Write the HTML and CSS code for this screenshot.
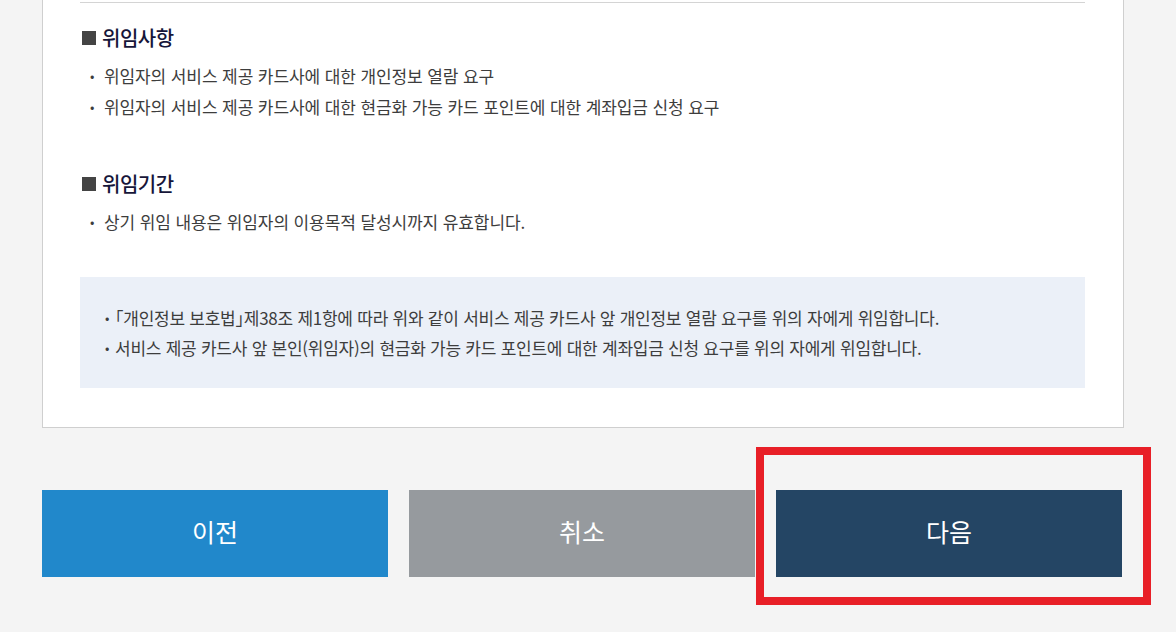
FILE: index.html
```html
<!DOCTYPE html>
<html lang="ko">
<head>
    <meta charset="UTF-8">
    <meta name="viewport" content="width=device-width, initial-scale=1.0">
    <title>위임 확인</title>
    <link rel="stylesheet" href="styles.css">
</head>
<body>
    <div class="wrap">
        <div class="card">
            <div class="divider"></div>

            <div class="section">
                <h3 class="sec-title">위임사항</h3>
                <ul class="dot-list">
                    <li>위임자의 서비스 제공 카드사에 대한 개인정보 열람 요구</li>
                    <li>위임자의 서비스 제공 카드사에 대한 현금화 가능 카드 포인트에 대한 계좌입금 신청 요구</li>
                </ul>
            </div>

            <div class="section">
                <h3 class="sec-title">위임기간</h3>
                <ul class="dot-list">
                    <li>상기 위임 내용은 위임자의 이용목적 달성시까지 유효합니다.</li>
                </ul>
            </div>

            <div class="notice">
                <ul class="notice-list">
                    <li>「개인정보 보호법」제38조 제1항에 따라 위와 같이 서비스 제공 카드사 앞 개인정보 열람 요구를 위의 자에게 위임합니다.</li>
                    <li>서비스 제공 카드사 앞 본인(위임자)의 현금화 가능 카드 포인트에 대한 계좌입금 신청 요구를 위의 자에게 위임합니다.</li>
                </ul>
            </div>
        </div>

        <div class="btn-row">
            <button class="btn btn-prev" type="button">이전</button>
            <button class="btn btn-cancel" type="button">취소</button>
            <div class="btn-slot">
                <button class="btn btn-next" type="button">다음</button>
                <span class="highlight"></span>
            </div>
        </div>
    </div>
</body>
</html>
```

FILE: styles.css
```css
body {
    margin: 0;
    background-color: #f4f4f4;
    font-family: "Noto Sans CJK KR", "Noto Sans", sans-serif;
    color: #3d3d3d;
}

.wrap {
    width: 1082px;
    margin-left: 42px;
    padding-bottom: 55px;
}

.card {
    background-color: #fff;
    border: 1px solid #cfcfcf;
    border-top: 0;
    padding: 2px 38px 39px 37px;
}

.divider {
    border-top: 1px solid #d4d4d4;
}

.sec-title {
    margin: 21px 0 0;
    font-size: 20px;
    line-height: 28px;
    font-weight: 500;
    color: #16163a;
    letter-spacing: -0.5px;
    display: flex;
    align-items: center;
}

.sec-title::before {
    content: "";
    width: 14px;
    height: 14px;
    background-color: #444;
    margin: 0 6px 0 2px;
}

.section + .section .sec-title {
    margin-top: 48px;
}

.dot-list,
.notice-list {
    list-style: none;
    margin: 0;
    padding: 0;
}

.dot-list {
    margin-top: 8px;
}

.dot-list li,
.notice-list li {
    position: relative;
    font-size: 17px;
    line-height: 31px;
    letter-spacing: -0.1px;
}

.dot-list li {
    padding-left: 24px;
}

.dot-list li::before,
.notice-list li::before {
    content: "•";
    position: absolute;
    font-size: 13px;
}

.dot-list li::before {
    left: 10px;
}

.notice {
    margin-top: 40px;
    background-color: #ebf0f8;
    padding: 26px 20px 25px 25px;
}

.notice-list li {
    line-height: 30px;
    padding-left: 10px;
    letter-spacing: -0.25px;
    font-feature-settings: "halt";
}

.notice-list li::before {
    left: 0;
}

.btn-row {
    display: grid;
    grid-template-columns: 346px 346px 346px;
    gap: 21px;
    margin-top: 62px;
}

.btn-slot {
    position: relative;
    display: flex;
}

.btn {
    width: 100%;
    height: 87px;
    border: 0;
    padding: 0 0 5px;
    font-family: inherit;
    font-size: 25px;
    color: #fff;
    cursor: pointer;
}

.btn-prev {
    background-color: #2188cb;
}

.btn-cancel {
    background-color: #969a9e;
}

.btn-next {
    background-color: #244564;
}

.highlight {
    position: absolute;
    left: -20px;
    top: -43px;
    width: 379px;
    height: 142px;
    border: 8px solid #e81f27;
    pointer-events: none;
}
```
